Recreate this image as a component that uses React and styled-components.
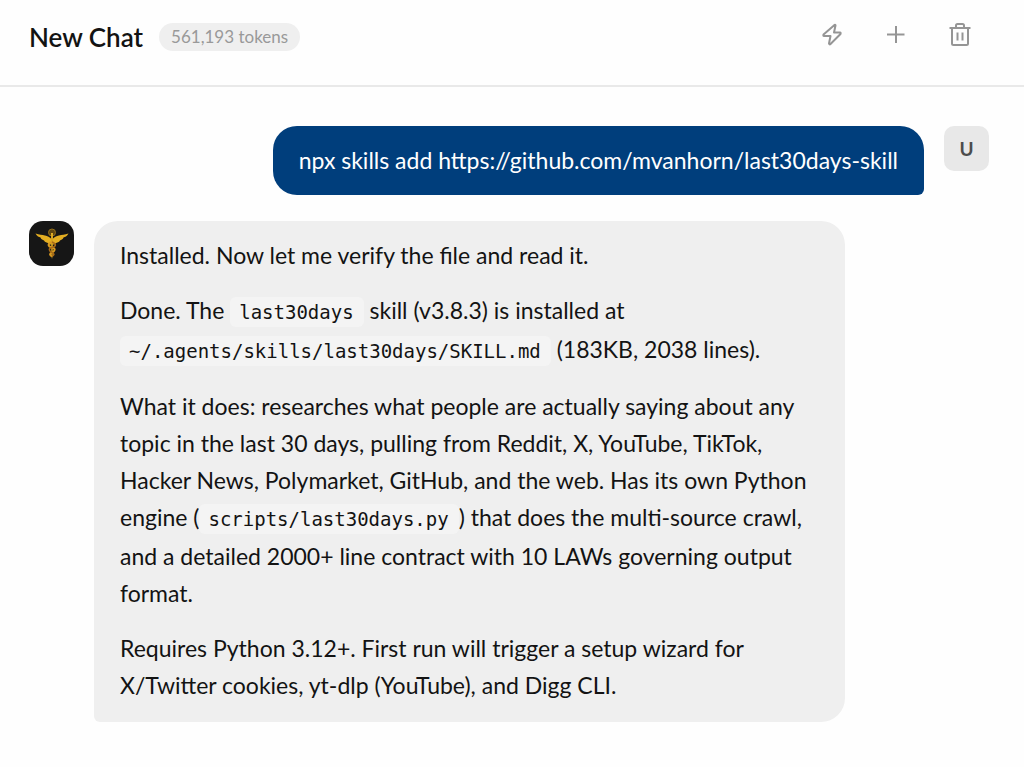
import React from "react";
import styled, { createGlobalStyle } from "styled-components";

const Global = createGlobalStyle`
  * { box-sizing: border-box; }
  body {
    margin: 0;
    background: #fefefe;
    color: #131313;
    font-family: Lato, "Liberation Sans", sans-serif;
    font-size: 23px;
    line-height: 37px;
  }
`;

const Header = styled.header`
  display: flex;
  align-items: center;
  justify-content: space-between;
  padding: 12px 41px 27px 29px;
  border-bottom: 2px solid #e9e9e9;
`;

const Heading = styled.div`
  display: flex;
  align-items: center;
  gap: 16px;
  padding-top: 4px;
`;

const Title = styled.h1`
  margin: 0;
  font-size: 26px;
  font-weight: 600;
`;

const TokenBadge = styled.span`
  padding: 0 12px;
  border-radius: 14px;
  background: #efefef;
  color: #999;
  font-size: 17px;
  line-height: 28px;
`;

const Actions = styled.div`
  display: flex;
  gap: 18px;
`;

const IconButton = styled.button`
  display: flex;
  align-items: center;
  justify-content: center;
  width: 46px;
  height: 46px;
  padding: 0;
  border: 0;
  border-radius: 12px;
  background: none;
  color: #959595;
  cursor: pointer;

  svg {
    fill: none;
    stroke: currentColor;
    stroke-width: 2;
    stroke-linejoin: round;
  }
`;

const Thread = styled.main`
  display: flex;
  flex-direction: column;
  gap: 26px;
  padding: 39px 35px 39px 29px;
`;

const Message = styled.article`
  display: flex;
  flex-direction: ${(p) => (p.$own ? "row-reverse" : "row")};
  align-items: flex-start;
  gap: 20px;
`;

const Avatar = styled.div`
  display: flex;
  flex: none;
  align-items: center;
  justify-content: center;
  width: 45px;
  height: 45px;
  border-radius: ${(p) => (p.$dark ? "14px" : "10px")};
  background: ${(p) => (p.$dark ? "#161616" : "#e8e8e8")};
  color: #4c4c4c;
  font-size: 19px;
  font-weight: 700;
`;

const Bubble = styled.div`
  max-width: calc(100% - 209px);
  padding: ${(p) => (p.$own ? "16px 26px" : "16px 26px 18px")};
  border-radius: ${(p) => (p.$own ? "24px 24px 6px 24px" : "24px 24px 24px 6px")};
  background: ${(p) => (p.$own ? "#003e7c" : "#efefef")};
  color: ${(p) => (p.$own ? "#fff" : "inherit")};
`;

const Paragraph = styled.p`
  margin: 0;

  & + & {
    margin-top: 18px;
  }
`;

const Code = styled.code`
  padding: 4px 10px 4px 9px;
  border-radius: 6px;
  background: #f4f4f4;
  font-family: "DejaVu Sans Mono", monospace;
  font-size: 19px;
`;

const Caduceus = () => (
  <svg width="36" height="36" viewBox="0 0 36 36" aria-hidden="true">
    <circle cx="18" cy="6.500" r="3.500" fill="#5f4610" stroke="#94701c" />
    <g fill="#e3ae22">
      <path d="M17.500 13C14 9 9 9.500 1.500 7.500C3 10.500 5 11 6.500 11.500C7 13.500 9 14 10 14.500C11 16.500 13 16.500 14 17C15 18.500 16.500 18.500 17.500 18.500Z" />
      <path d="M18.500 13C22 9 27 9.500 34.500 7.500C33 10.500 31 11 29.500 11.500C29 13.500 27 14 26 14.500C25 16.500 23 16.500 22 17C21 18.500 19.500 18.500 18.500 18.500Z" />
      <path d="M17 7H19L18.600 30L18 33L17.400 30Z" />
    </g>
    <path d="M18 16C13 18 14 20.500 18 21.500S21 25 18 26.500S16 29 18 30.500" fill="none" stroke="#d99a20" strokeWidth="2" />
    <path d="M18 16C23 18 22 20.500 18 21.500S15 25 18 26.500S20 29 18 30.500" fill="none" stroke="#a86a18" strokeWidth="1.500" />
  </svg>
);

export default function App() {
  return (
    <>
      <Global />
      <Header>
        <Heading>
          <Title>New Chat</Title>
          <TokenBadge>561,193 tokens</TokenBadge>
        </Heading>
        <Actions>
          <IconButton aria-label="Quick actions">
            <svg width="24" height="24" viewBox="0 0 24 24">
              <path d="M14.500 2L3.500 11.500Q3 13 4 13H10.500L9 20.500Q9.500 22 10.500 21L20.500 11Q21 9.500 20 9.500H14L15.500 2.500Q15.500 1.500 14.500 2Z" />
            </svg>
          </IconButton>
          <IconButton aria-label="New chat">
            <svg width="24" height="24" viewBox="0 0 24 24">
              <path d="M12 3V20M3 11.500H20.500" />
            </svg>
          </IconButton>
          <IconButton aria-label="Delete chat">
            <svg width="24" height="24" viewBox="0 0 24 24">
              <path d="M1.500 5H22.500M4 5V20.500Q4 22 5.500 22H18.500Q20 22 20 20.500V5M8 5V2.500Q8 1 9.500 1H14.500Q16 1 16 2.500V5M9.500 9.500V17.500M14.500 9.500V17.500" />
            </svg>
          </IconButton>
        </Actions>
      </Header>
      <Thread>
        <Message $own>
          <Avatar>U</Avatar>
          <Bubble $own>
            <Paragraph>npx skills add https://github.com/mvanhorn/last30days-skill</Paragraph>
          </Bubble>
        </Message>
        <Message>
          <Avatar $dark>
            <Caduceus />
          </Avatar>
          <Bubble>
            <Paragraph>Installed. Now let me verify the file and read it.</Paragraph>
            <Paragraph>
              Done. The <Code>last30days</Code> skill (v3.8.3) is installed at{" "}
              <Code>~/.agents/skills/last30days/SKILL.md</Code> (183KB, 2038 lines).
            </Paragraph>
            <Paragraph>
              What it does: researches what people are actually saying about any topic in the last 30
              days, pulling from Reddit, X, YouTube, TikTok, Hacker News, Polymarket, GitHub, and the
              web. Has its own Python engine (<Code>scripts/last30days.py</Code>) that does the
              multi-source crawl, and a detailed 2000+ line contract with 10 LAWs governing output
              format.
            </Paragraph>
            <Paragraph>
              Requires Python 3.12+. First run will trigger a setup wizard for X/Twitter cookies,
              yt-dlp (YouTube), and Digg CLI.
            </Paragraph>
          </Bubble>
        </Message>
      </Thread>
    </>
  );
}
